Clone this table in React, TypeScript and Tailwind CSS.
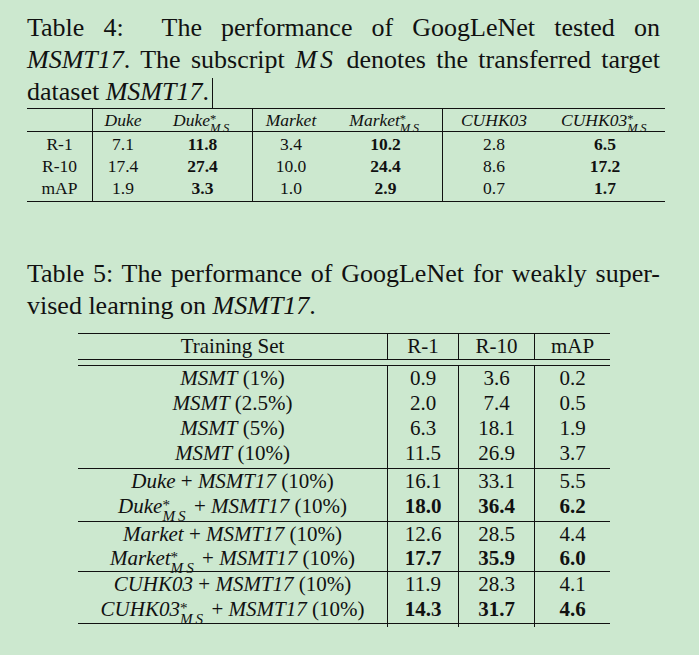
import React from "react";

function Sub() {
  return (
    <>
      <span className="inline-block w-0 align-[0.2em] text-[0.72em] leading-none not-italic">*</span>
      <span className="align-[-0.5em] text-[0.72em] leading-none italic tracking-[0.2em]">MS</span>
    </>
  );
}

const t4cols = "grid grid-cols-[66px_60px_100px_76px_114px_102px_120px]";
const t4border = ["border-r border-[#111]", "", "border-r border-[#111]", "", "border-r border-[#111]", "", ""];

const t4rows: [string, string[]][] = [
  ["R-1", ["7.1", "11.8", "3.4", "10.2", "2.8", "6.5"]],
  ["R-10", ["17.4", "27.4", "10.0", "24.4", "8.6", "17.2"]],
  ["mAP", ["1.9", "3.3", "1.0", "2.9", "0.7", "1.7"]],
];

const t5cols = "grid grid-cols-[310px_71px_76px_75px]";

type R5 = { label: React.ReactNode; v: string[]; bold?: boolean; h: string };

const groups: R5[][] = [
  [
    { label: <><i>MSMT</i> (1%)</>, v: ["0.9", "3.6", "0.2"], h: "h-[25px]" },
    { label: <><i>MSMT</i> (2.5%)</>, v: ["2.0", "7.4", "0.5"], h: "h-[25px]" },
    { label: <><i>MSMT</i> (5%)</>, v: ["6.3", "18.1", "1.9"], h: "h-[25px]" },
    { label: <><i>MSMT</i> (10%)</>, v: ["11.5", "26.9", "3.7"], h: "h-[27px]" },
  ],
  [
    { label: <><i>Duke</i> + <i>MSMT17</i> (10%)</>, v: ["16.1", "33.1", "5.5"], h: "h-[25px]" },
    { label: <><i>Duke</i><Sub /> + <i>MSMT17</i> (10%)</>, v: ["18.0", "36.4", "6.2"], bold: true, h: "h-[27px]" },
  ],
  [
    { label: <><i>Market</i> + <i>MSMT17</i> (10%)</>, v: ["12.6", "28.5", "4.4"], h: "h-[24px]" },
    { label: <><i>Market</i><Sub /> + <i>MSMT17</i> (10%)</>, v: ["17.7", "35.9", "6.0"], bold: true, h: "h-[25px]" },
  ],
  [
    { label: <><i>CUHK03</i> + <i>MSMT17</i> (10%)</>, v: ["11.9", "28.3", "4.1"], h: "h-[25px]" },
    { label: <><i>CUHK03</i><Sub /> + <i>MSMT17</i> (10%)</>, v: ["14.3", "31.7", "4.6"], bold: true, h: "h-[26px]" },
  ],
];

export default function App() {
  return (
    <div className="w-[699px] h-[655px] overflow-hidden bg-[#cce8cf] text-[#111] [font-family:'Liberation_Serif','Times_New_Roman',serif]">
      {/* Table 4 caption */}
      <div className="pt-[12px] pl-[27px] w-[660px] text-[26px] leading-[32px]">
        <div className="text-justify [text-align-last:justify] whitespace-nowrap">Table 4:&nbsp; The performance of GoogLeNet tested on</div>
        <div className="text-justify [text-align-last:justify]">
          <i>MSMT17</i>. The subscript <i className="tracking-[0.12em]">MS</i> denotes the transferred target
        </div>
        <div>
          dataset <i>MSMT17</i>.<span className="inline-block w-px h-[30px] bg-[#111] align-bottom ml-[3px]" />
        </div>
      </div>

      {/* Table 4 */}
      <div className="ml-[27px] w-[638px] border-t border-b border-[#111] text-[17.5px] leading-[22px]">
        <div className={`${t4cols} h-[23px] border-b border-[#111]`}>
          <div className={`${t4border[0]}`} />
          <div className="text-center italic">Duke</div>
          <div className={`text-center ${t4border[2]}`}><i>Duke</i><Sub /></div>
          <div className="text-center italic">Market</div>
          <div className={`text-center ${t4border[4]}`}><i>Market</i><Sub /></div>
          <div className="text-center italic">CUHK03</div>
          <div className="text-center"><i>CUHK03</i><Sub /></div>
        </div>
        {t4rows.map(([label, vals], ri) => (
          <div key={label} className={`${t4cols} ${ri === 0 ? "h-[23px] pt-[1px]" : ri === 2 ? "h-[24px]" : "h-[22px]"}`}>
            <div className={`text-center ${t4border[0]}`}>{label}</div>
            {vals.map((v, i) => (
              <div key={i} className={`text-center ${i % 2 === 1 ? "font-bold" : ""} ${t4border[i + 1]}`}>{v}</div>
            ))}
          </div>
        ))}
      </div>

      {/* Table 5 caption */}
      <div className="mt-[56px] pl-[27px] w-[660px] text-[26px] leading-[32px]">
        <div className="text-justify [text-align-last:justify] whitespace-nowrap">Table 5: The performance of GoogLeNet for weakly super-</div>
        <div>
          vised learning on <i>MSMT17</i>.
        </div>
      </div>

      {/* Table 5 */}
      <div className="mt-[11px] ml-[78px] w-[532px] text-[21px] leading-[25px]">
        <div className={`${t5cols} h-[27px] border-t border-b border-[#111]`}>
          <div className="text-center border-r border-[#111]">Training Set</div>
          <div className="text-center border-r border-[#111]">R-1</div>
          <div className="text-center border-r border-[#111]">R-10</div>
          <div className="text-center">mAP</div>
        </div>
        <div className="h-[5px]" />
        <div className="border-t border-b border-[#111]">
          {groups.map((g, gi) => (
            <div key={gi} className={gi > 0 ? "border-t border-[#111]" : ""}>
              {g.map((r, ri) => (
                <div key={ri} className={`${t5cols} ${r.h}`}>
                  <div className="text-center border-r border-[#111] whitespace-nowrap">{r.label}</div>
                  {r.v.map((v, i) => (
                    <div key={i} className={`text-center ${r.bold ? "font-bold" : ""} ${i < 2 ? "border-r border-[#111]" : ""}`}>{v}</div>
                  ))}
                </div>
              ))}
            </div>
          ))}
        </div>
      </div>
    </div>
  );
}
